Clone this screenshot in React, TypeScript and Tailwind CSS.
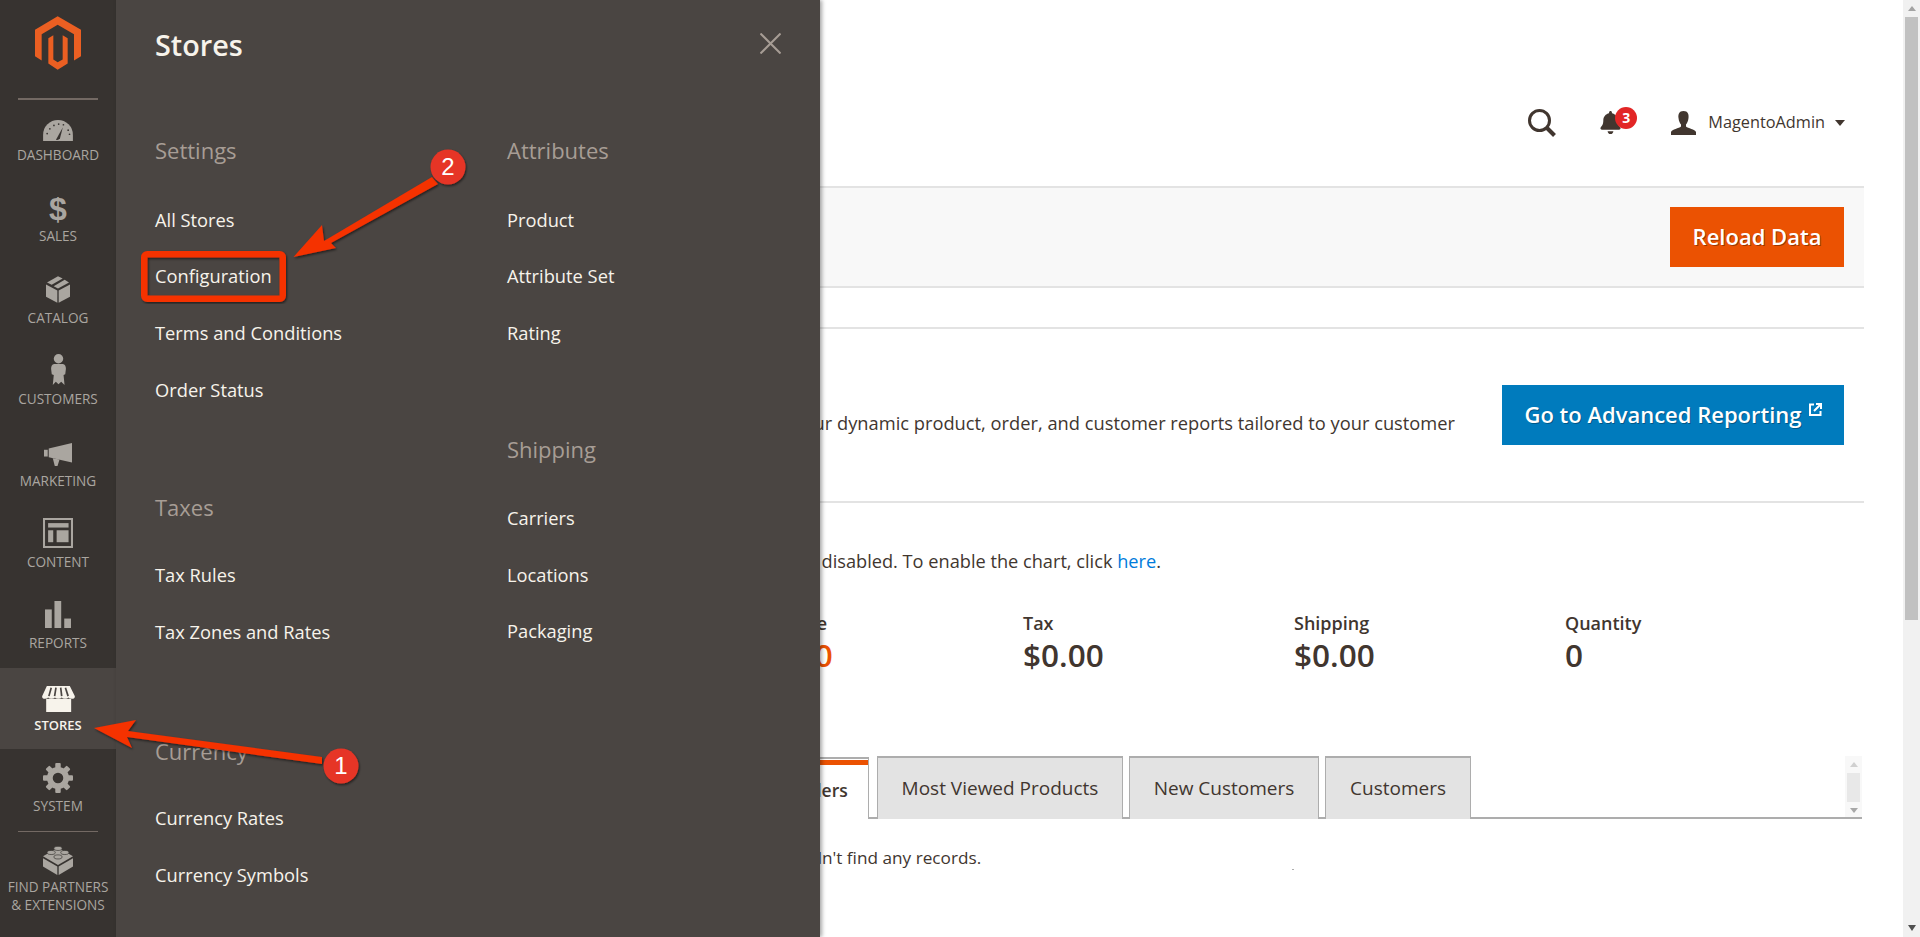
import React from "react";
import { FaBell } from "react-icons/fa";

const ICON = "#aaa6a0";

const Logo = () => (
  <svg width="46" height="54" viewBox="105 48 138 161">
    <path
      fill="#eb5f22"
      d="M173 48 L243 89 V168 L222 181 V102 L173 74 L125 102 V181 L105 168 V89 Z M145 114 L160 105 V178 L173 186 L188 178 V105 L203 114 V190 L173 209 L145 190 Z"
    />
  </svg>
);

const Dashboard = () => (
  <svg width="30" height="21" viewBox="0 0 88 62">
    <path fill={ICON} d="M0 62 V44 A44 44 0 0 1 88 44 V62 Z" />
    <path fill="#373330" d="M38 58 L58 22 L50 54 Q44 62 38 58 Z" />
    <g fill="#373330">
      <circle cx="12" cy="40" r="2.5" />
      <circle cx="20" cy="26" r="2.5" />
      <circle cx="32" cy="16" r="2.5" />
      <circle cx="46" cy="12" r="2.5" />
      <circle cx="60" cy="14" r="2.5" />
      <circle cx="74" cy="30" r="2.5" />
      <circle cx="78" cy="42" r="2.5" />
    </g>
  </svg>
);

const Sales = () => (
  <span className="font-['Liberation_Sans',sans-serif] font-bold text-[32px] leading-none text-[#aaa6a0]">$</span>
);

const Catalog = () => (
  <svg width="24" height="27" viewBox="0 0 72 80">
    <g fill={ICON}>
      <path d="M0 25 L34 43 V80 L0 62 Z" />
      <path d="M38 43 L72 25 V62 L38 80 Z" />
      <path d="M3 19 L36 0 L50 7 L17 26 Z" />
      <path d="M23 30 L56 11 L69 19 L36 37 Z" />
    </g>
  </svg>
);

const Customers = () => (
  <svg width="15" height="31" viewBox="0 0 44 92">
    <circle cx="22" cy="14" r="14" fill={ICON} />
    <path
      fill={ICON}
      d="M9 30 H35 Q44 32 44 44 L42 60 L37 62 L40 92 L30 82 L22 90 L14 82 L5 92 L8 62 L2 60 L0 44 Q0 32 9 30 Z"
    />
  </svg>
);

const Marketing = () => (
  <svg width="28" height="23" viewBox="0 0 83 68">
    <g fill={ICON}>
      <rect x="0" y="20" width="11" height="20" />
      <path d="M14 16 L83 0 V58 L14 42 Z" />
      <path d="M26 45 L46 49 L40 68 L32 68 Z" />
    </g>
  </svg>
);

const Content = () => (
  <svg width="30" height="30" viewBox="0 0 88 88">
    <path fill={ICON} fillRule="evenodd" d="M0 0 H88 V88 H0 Z M6 6 V82 H82 V6 Z" />
    <g fill={ICON}>
      <rect x="15" y="15" width="60" height="13" />
      <rect x="15" y="36" width="15" height="35" />
      <rect x="40" y="36" width="35" height="35" />
    </g>
  </svg>
);

const Reports = () => (
  <svg width="26" height="27" viewBox="0 0 77 80">
    <g fill={ICON}>
      <rect x="0" y="25" width="20" height="55" />
      <rect x="28" y="0" width="20" height="80" />
      <rect x="57" y="52" width="20" height="28" />
    </g>
  </svg>
);

const Stores = () => (
  <svg width="33" height="26" viewBox="0 0 97 77">
    <path fill="#f7f3eb" d="M12 38 H86 V77 H12 Z" />
    <path
      fill="#f7f3eb"
      d="M14 0 H82 L97 30 Q97 38 88 38 Q80 38 78 34 Q74 38 68 38 Q61 38 58 34 Q54 38 48 38 Q42 38 38 34 Q34 38 28 38 Q20 38 18 34 Q14 38 8 38 Q0 38 0 30 Z"
    />
    <g stroke="#4a4542" strokeWidth="5">
      <path d="M27 5 L20 30" />
      <path d="M41 5 L37 30" />
      <path d="M55 5 L58 30" />
      <path d="M69 5 L77 30" />
    </g>
  </svg>
);

const System = () => (
  <svg width="30" height="30" viewBox="0 0 88 88">
    <circle cx="44" cy="44" r="24" fill="none" stroke={ICON} strokeWidth="17" />
    <g fill={ICON}>
      {[0, 45, 90, 135, 180, 225, 270, 315].map((a) => (
        <rect key={a} x="36" y="0" width="16" height="16" rx="3" transform={`rotate(${a} 44 44)`} />
      ))}
    </g>
  </svg>
);

const Partners = () => (
  <svg width="30" height="30" viewBox="0 0 88 88">
    <g fill={ICON}>
      <path d="M0 39 L42 63 V88 L0 63 Z" />
      <path d="M46 63 L88 39 V63 L46 88 Z" />
      <path d="M0 33 L44 8 L88 33 L44 59 Z" />
    </g>
    <g fill={ICON} stroke="#373330" strokeWidth="2">
      <ellipse cx="44" cy="10" rx="12" ry="6" />
      <ellipse cx="24" cy="22" rx="12" ry="6" />
      <ellipse cx="64" cy="22" rx="12" ry="6" />
      <ellipse cx="44" cy="35" rx="12" ry="6" />
    </g>
  </svg>
);

function NavItem({
  icon,
  label,
  active,
  shift,
}: {
  icon: React.ReactNode;
  label: string;
  active?: boolean;
  shift?: string;
}) {
  return (
    <div className={`h-[81.4px] flex flex-col items-center pt-[14px] ${active ? "bg-[#4a4542]" : ""}`}>
      <div className={`h-[36px] flex items-center justify-center ${shift ?? ""}`}>{icon}</div>
      <div
        className={`leading-[14px] uppercase whitespace-nowrap ${active ? "text-[13px] text-[#f7f3eb] font-semibold" : "text-[13.6px] text-[#aaa6a0]"}`}
      >
        {label}
      </div>
    </div>
  );
}

function Sidebar() {
  return (
    <div className="w-[116px] shrink-0 h-[937px] bg-[#373330] flex flex-col">
      <div className="h-[98px] flex justify-center pt-[16px]">
        <Logo />
      </div>
      <div className="h-[2px] mx-[18px] bg-[#736963] -mb-[2px]" />
      <NavItem icon={<Dashboard />} label="Dashboard" />
      <NavItem icon={<Sales />} label="Sales" shift="pb-[4px]" />
      <NavItem icon={<Catalog />} label="Catalog" shift="pb-[6px]" />
      <NavItem icon={<Customers />} label="Customers" shift="pb-[9px]" />
      <NavItem icon={<Marketing />} label="Marketing" shift="pb-[3px]" />
      <NavItem icon={<Content />} label="Content" shift="pb-[8px]" />
      <NavItem icon={<Reports />} label="Reports" shift="pb-[7px]" />
      <NavItem icon={<Stores />} label="Stores" active shift="pb-[2px]" />
      <NavItem icon={<System />} label="System" shift="pb-[6px]" />
      <div className="h-px mx-[18px] bg-[#736963]" />
      <div className="flex flex-col items-center pt-[13px]">
        <Partners />
        <div className="mt-[3px] text-[13.6px] leading-[18px] text-[#aaa6a0] text-center uppercase whitespace-nowrap">
          Find Partners
          <br />& Extensions
        </div>
      </div>
    </div>
  );
}

function MenuGroup({
  title,
  items,
  gap,
  itemGap,
}: {
  title: string;
  items: string[];
  gap?: string;
  itemGap: string;
}) {
  return (
    <div className={gap}>
      <div className="h-[24px] leading-[24px] text-[22px] text-[#a79d95]">{title}</div>
      <div className={itemGap}>
        {items.map((t) => (
          <div key={t} className="h-[56.67px] flex items-center text-[18.3px] text-[#f7f3eb] whitespace-nowrap">
            {t}
          </div>
        ))}
      </div>
    </div>
  );
}

function MenuPanel() {
  return (
    <div className="absolute left-[116px] top-0 w-[704px] h-[937px] bg-[#4a4542] pl-[39px] pt-[26px] shadow-[2px_0_4px_rgba(0,0,0,0.35)] z-10">
      <div className="text-[28.8px] leading-[38px] font-semibold text-[#f7f3eb]">Stores</div>
      <svg className="absolute left-[644px] top-[33px]" width="21" height="21" viewBox="0 0 21 21">
        <path d="M0.5 0.5 L20.5 20.5 M20.5 0.5 L0.5 20.5" stroke="#a79d95" strokeWidth="2" fill="none" />
      </svg>
      <div className="flex mt-[74px]">
        <div className="w-[352px]">
          <MenuGroup
            title="Settings"
            itemGap="mt-[29px]"
            items={["All Stores", "Configuration", "Terms and Conditions", "Order Status"]}
          />
          <MenuGroup title="Taxes" gap="mt-[77px]" itemGap="mt-[28px]" items={["Tax Rules", "Tax Zones and Rates"]} />
          <MenuGroup
            title="Currency"
            gap="mt-[79.4px]"
            itemGap="mt-[26px]"
            items={["Currency Rates", "Currency Symbols"]}
          />
        </div>
        <div>
          <MenuGroup title="Attributes" itemGap="mt-[29px]" items={["Product", "Attribute Set", "Rating"]} />
          <MenuGroup
            title="Shipping"
            gap="mt-[76.4px]"
            itemGap="mt-[28px]"
            items={["Carriers", "Locations", "Packaging"]}
          />
        </div>
      </div>
    </div>
  );
}

function Stat({ label, value, orange }: { label: string; value: string; orange?: boolean }) {
  return (
    <div className="w-[271px]">
      <div className="text-[18px] leading-[22px] font-semibold text-[#41362f]">{label}</div>
      <div
        className={`text-[31.5px] leading-[40px] font-semibold mt-[1px] ${orange ? "text-[#eb5202]" : "text-[#41362f]"}`}
      >
        {value}
      </div>
    </div>
  );
}

function Tab({ label, w }: { label: string; w: string }) {
  return (
    <div
      className={`${w} h-[63px] bg-[#e3e3e3] border border-t-2 border-[#adadad] border-b-0 flex items-center justify-center text-[19px] text-[#41362f] whitespace-nowrap`}
    >
      {label}
    </div>
  );
}

function Main() {
  return (
    <div className="flex-1 min-w-0 pr-[39px] text-[#41362f]">
      <div className="h-[186px] flex justify-end pt-[109px] pr-[19px]">
        <div className="flex h-[27px] items-center">
          <svg width="28" height="28" viewBox="0 0 28 28" className="mr-[44px]">
            <circle cx="11.5" cy="11.5" r="10" fill="none" stroke="#41362f" strokeWidth="3" />
            <path d="M18.5 18.5 L26.5 26.5" stroke="#41362f" strokeWidth="4" />
          </svg>
          <div className="relative mr-[51px] w-[20px] h-[24px] text-[#41362f]">
            <FaBell className="w-[21px] h-[23px]" />
            <span className="absolute left-[15px] -top-[4px] w-[22px] h-[22px] rounded-full bg-[#e22626] text-white text-[14px] font-bold leading-[22px] text-center">
              3
            </span>
          </div>
          <svg width="25" height="24" viewBox="0 0 25 24" className="mr-[12px]">
            <path
              fill="#41362f"
              d="M12.5 0 C17 0 18 3.5 17.5 7 C17.2 10 16 12.5 15 13.5 V15.5 C17 17.5 24 18 25 21 V24 H0 V21 C1 18 8 17.5 10 15.5 V13.5 C9 12.5 7.8 10 7.5 7 C7 3.5 8 0 12.5 0 Z"
            />
          </svg>
          <span className="text-[16.3px] text-[#41362f] whitespace-nowrap">MagentoAdmin</span>
          <svg width="10" height="6" viewBox="0 0 10 6" className="ml-[10px]">
            <path d="M0 0 H10 L5 6 Z" fill="#41362f" />
          </svg>
        </div>
      </div>

      <div className="h-[102px] bg-[#f8f8f8] border-y-2 border-[#e3e3e3] flex items-center justify-end pr-[20px]">
        <div className="w-[174px] h-[60px] bg-[#eb5202] text-white text-[22px] font-semibold flex items-center justify-center pb-[1px] [text-shadow:1px_1px_0_rgba(0,0,0,0.35)]">
          Reload Data
        </div>
      </div>

      <div className="mt-[39px] h-[176px] border-y-2 border-[#e3e3e3] flex items-start justify-end pr-[20px] pt-[56px] gap-[47px]">
        <p className="text-[18.3px] leading-[22px] whitespace-nowrap text-right pt-[27px] overflow-hidden min-w-0">
          Gain new insights and take command of your business' performance, using our dynamic product, order, and
          customer reports tailored to your customer
        </p>
        <div className="w-[342px] h-[60px] shrink-0 bg-[#007bbd] text-white text-[22px] font-semibold flex items-center justify-center gap-[7px] pb-[1px] [text-shadow:1px_1px_0_rgba(0,0,0,0.3)]">
          <span>Go to Advanced Reporting</span>
          <svg width="13" height="13" viewBox="0 0 13 13" className="-mt-[10px]">
            <path d="M5 1.5 H1 V12 H11.5 V8" fill="none" stroke="#fff" strokeWidth="2" />
            <path d="M5 8 L11 2 M7 1 H12 V6" fill="none" stroke="#fff" strokeWidth="2" />
          </svg>
        </div>
      </div>

      <p className="mt-[47px] text-[18.2px] leading-[22px] text-right pr-[703px] whitespace-nowrap">
        Chart is disabled. To enable the chart, click <span className="text-[#007bdb]">here</span>.
      </p>

      <div className="flex ml-[636px] mt-[40px]">
        <Stat label="Revenue" value="$0.00" orange />
        <Stat label="Tax" value="$0.00" />
        <Stat label="Shipping" value="$0.00" />
        <Stat label="Quantity" value="0" />
      </div>

      <div className="relative ml-[619px] mt-[81px] h-[63px] flex items-end gap-[6px] border-b-2 border-[#adadad] mr-[2px]">
        <div className="-mb-[2px] w-[134px] mr-[2px] h-[62px] bg-white border border-t-2 border-[#adadad] border-b-0 text-[17.5px] font-semibold flex items-center justify-center relative">
          <span className="absolute left-0 right-0 top-[1px] h-[5px] bg-[#eb5202]" />
          <span className="pt-[3px]">Bestsellers</span>
        </div>
        <div className="-mb-[2px] flex gap-[6px]">
          <Tab label="Most Viewed Products" w="w-[246px]" />
          <Tab label="New Customers" w="w-[190px]" />
          <Tab label="Customers" w="w-[146px]" />
        </div>
        <div className="absolute right-0 top-0 bottom-0 w-[17px] bg-[#f8f8f8] flex flex-col items-center">
          <div className="mt-[6px] w-0 h-0 border-x-[4px] border-x-transparent border-b-[5px] border-b-[#d0d0d0]" />
          <div className="mt-[6px] w-[13px] h-[29px] bg-[#e8e8e8]" />
          <div className="mt-[6px] w-0 h-0 border-x-[4px] border-x-transparent border-t-[5px] border-t-[#a8a8a8]" />
        </div>
      </div>

      <p className="ml-[632px] mt-[28px] text-[17.2px] leading-[22px] whitespace-nowrap">
        We couldn't find any records.
      </p>
      <div className="ml-[1176px] w-[2px] h-px bg-[#adadad]" />
    </div>
  );
}

function PageScrollbar() {
  return (
    <div className="w-[17px] h-[937px] shrink-0 bg-[#f1f1f1] flex flex-col items-center">
      <div className="h-[17px] flex items-center">
        <div className="w-0 h-0 border-x-[4px] border-x-transparent border-b-[5px] border-b-[#a3a3a3]" />
      </div>
      <div className="w-[13px] h-[603px] bg-[#c1c1c1]" />
      <div className="mt-auto mb-[6px] w-0 h-0 border-x-[4px] border-x-transparent border-t-[6px] border-t-[#505050]" />
    </div>
  );
}

function Annotations() {
  return (
    <svg className="absolute left-0 top-0 z-20 pointer-events-none" width="1920" height="937" viewBox="0 0 1920 937">
      <defs>
        <filter id="sh" x="-10%" y="-10%" width="120%" height="120%">
          <feDropShadow dx="1" dy="1.5" stdDeviation="0.8" floodColor="#000" floodOpacity="0.55" />
        </filter>
      </defs>
      <rect
        x="144.25"
        y="254.25"
        width="138.5"
        height="44.5"
        rx="3"
        fill="none"
        stroke="#f53003"
        strokeWidth="6.5"
        filter="url(#sh)"
      />
      <path d="M94 728 L136 720 L128 731 L322 757 L322 764 L127 737 L132 748 Z" fill="#f53003" filter="url(#sh)" />
      <circle cx="341" cy="766" r="17.5" fill="#e63525" filter="url(#sh)" />
      <path d="M293.5 257 L322 225 L324 241 L432 177 L438 184 L331 243 L336 248 Z" fill="#f53003" filter="url(#sh)" />
      <circle cx="448" cy="167" r="17.5" fill="#e63525" filter="url(#sh)" />
    </svg>
  );
}

export default function App() {
  return (
    <div className="relative flex w-[1920px] h-[937px] overflow-hidden bg-white font-['Open_Sans',sans-serif]">
      <Sidebar />
      <Main />
      <PageScrollbar />
      <MenuPanel />
      <Annotations />
      <div className="absolute z-30 left-[331px] top-[754px] w-[20px] text-center text-white text-[24px] leading-[24px] font-['Liberation_Sans',sans-serif]">
        1
      </div>
      <div className="absolute z-30 left-[438px] top-[155px] w-[20px] text-center text-white text-[24px] leading-[24px] font-['Liberation_Sans',sans-serif]">
        2
      </div>
    </div>
  );
}
